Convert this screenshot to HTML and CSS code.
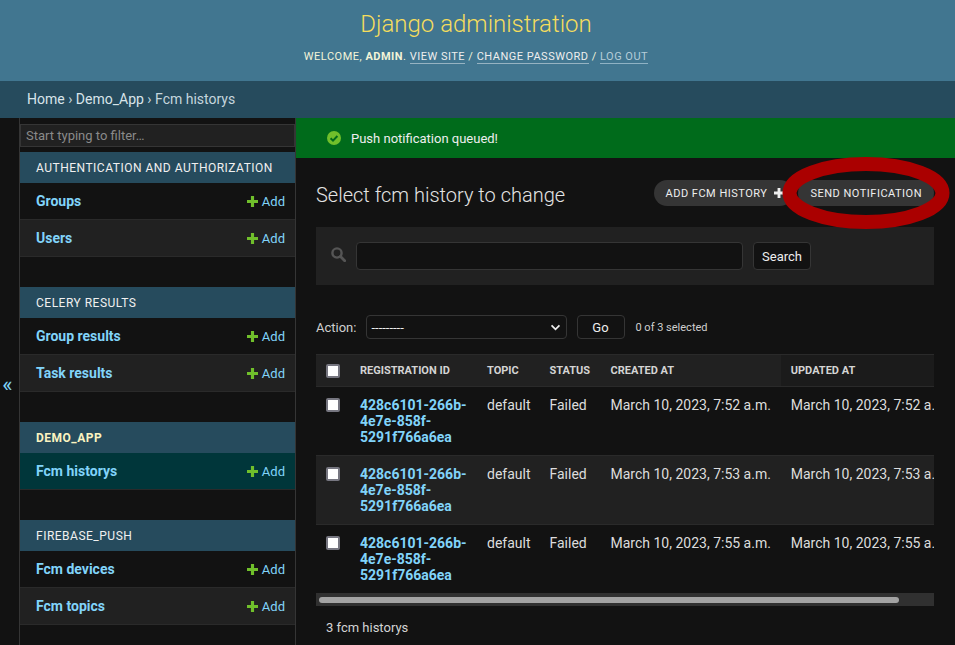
FILE: index.html
```html
<!DOCTYPE html>
<html lang="en">
<head>
    <meta charset="UTF-8">
    <title>Select fcm history to change | Django site admin</title>
    <link rel="stylesheet" href="styles.css">
</head>
<body>
    <header class="site-header">
        <h1 class="brand">Django administration</h1>
        <div class="user-tools">
            Welcome, <strong>admin</strong>. <a href="#">View site</a> / <a href="#">Change password</a> / <a href="#" class="visited">Log out</a>
        </div>
    </header>
    <nav class="breadcrumbs"><a href="#">Home</a> › <a href="#">Demo_App</a> › Fcm historys</nav>

    <div class="main">
        <button class="nav-toggle" type="button">«</button>
        <aside class="sidebar">
            <input class="nav-filter" type="text" placeholder="Start typing to filter…">

            <section class="app">
                <h2 class="app-title">Authentication and Authorization</h2>
                <div class="model"><a href="#" class="model-name">Groups</a><a href="#" class="add-link"><svg viewBox="0 0 14 14"><path d="M5 0h4v5h5v4H9v5H5V9H0V5h5z"/></svg>Add</a></div>
                <div class="model alt"><a href="#" class="model-name">Users</a><a href="#" class="add-link"><svg viewBox="0 0 14 14"><path d="M5 0h4v5h5v4H9v5H5V9H0V5h5z"/></svg>Add</a></div>
            </section>
            <section class="app">
                <h2 class="app-title">Celery Results</h2>
                <div class="model"><a href="#" class="model-name">Group results</a><a href="#" class="add-link"><svg viewBox="0 0 14 14"><path d="M5 0h4v5h5v4H9v5H5V9H0V5h5z"/></svg>Add</a></div>
                <div class="model alt"><a href="#" class="model-name">Task results</a><a href="#" class="add-link"><svg viewBox="0 0 14 14"><path d="M5 0h4v5h5v4H9v5H5V9H0V5h5z"/></svg>Add</a></div>
            </section>
            <section class="app">
                <h2 class="app-title current">Demo_App</h2>
                <div class="model selected"><a href="#" class="model-name">Fcm historys</a><a href="#" class="add-link"><svg viewBox="0 0 14 14"><path d="M5 0h4v5h5v4H9v5H5V9H0V5h5z"/></svg>Add</a></div>
            </section>
            <section class="app">
                <h2 class="app-title">Firebase_Push</h2>
                <div class="model"><a href="#" class="model-name">Fcm devices</a><a href="#" class="add-link"><svg viewBox="0 0 14 14"><path d="M5 0h4v5h5v4H9v5H5V9H0V5h5z"/></svg>Add</a></div>
                <div class="model alt"><a href="#" class="model-name">Fcm topics</a><a href="#" class="add-link"><svg viewBox="0 0 14 14"><path d="M5 0h4v5h5v4H9v5H5V9H0V5h5z"/></svg>Add</a></div>
            </section>
        </aside>

        <main class="content">
            <div class="message">
                <svg class="message-icon" viewBox="0 0 14 14"><circle cx="7" cy="7" r="7" fill="#70bf2b"/><path d="M3.6 7.2l2.4 2.4 4.4-4.6" fill="none" stroke="#006b1b" stroke-width="2"/></svg>
                Push notification queued!
            </div>
            <div class="content-inner">
                <div class="title-row">
                    <h1 class="page-title">Select fcm history to change</h1>
                    <div class="object-tools">
                        <a href="#" class="tool-btn add-tool">Add fcm history<svg viewBox="0 0 14 14"><path d="M5 0h4v5h5v4H9v5H5V9H0V5h5z"/></svg></a>
                        <a href="#" class="tool-btn">Send notification</a>
                    </div>
                </div>

                <form class="search-bar">
                    <svg class="search-icon" viewBox="0 0 15 15"><circle cx="6" cy="6" r="4.6" fill="none" stroke="#555" stroke-width="2.4"/><path d="M9.5 9.5l4.2 4.2" stroke="#555" stroke-width="2.8" stroke-linecap="round"/></svg>
                    <input class="search-input" type="text">
                    <button class="btn search-btn" type="button">Search</button>
                </form>

                <div class="actions">
                    <label>Action:</label>
                    <div class="fake-select">---------<svg viewBox="0 0 12 8"><path d="M1.5 1.5L6 6l4.5-4.5" fill="none" stroke="#eee" stroke-width="2"/></svg></div>
                    <button class="btn go-btn" type="button">Go</button>
                    <span class="selected-count">0 of 3 selected</span>
                </div>

                <div class="table-wrap">
                    <table class="results">
                        <thead>
                            <tr>
                                <th class="check"><span class="checkbox"></span></th>
                                <th class="col-id">Registration ID</th>
                                <th class="col-topic">Topic</th>
                                <th class="col-status">Status</th>
                                <th class="col-date">Created at</th>
                                <th class="col-date sorted">Updated at</th>
                            </tr>
                        </thead>
                        <tbody>
                            <tr>
                                <td class="check"><span class="checkbox"></span></td>
                                <td class="col-id"><a href="#">428c6101-266b-4e7e-858f-5291f766a6ea</a></td>
                                <td>default</td>
                                <td>Failed</td>
                                <td>March 10, 2023, 7:52 a.m.</td>
                                <td>March 10, 2023, 7:52 a.m.</td>
                            </tr>
                            <tr class="alt">
                                <td class="check"><span class="checkbox"></span></td>
                                <td class="col-id"><a href="#">428c6101-266b-4e7e-858f-5291f766a6ea</a></td>
                                <td>default</td>
                                <td>Failed</td>
                                <td>March 10, 2023, 7:53 a.m.</td>
                                <td>March 10, 2023, 7:53 a.m.</td>
                            </tr>
                            <tr>
                                <td class="check"><span class="checkbox"></span></td>
                                <td class="col-id"><a href="#">428c6101-266b-4e7e-858f-5291f766a6ea</a></td>
                                <td>default</td>
                                <td>Failed</td>
                                <td>March 10, 2023, 7:55 a.m.</td>
                                <td>March 10, 2023, 7:55 a.m.</td>
                            </tr>
                        </tbody>
                    </table>
                </div>
                <div class="scroll-track"><div class="scroll-thumb"></div></div>
                <p class="paginator">3 fcm historys</p>
            </div>
        </main>
    </div>

    <svg class="annotation" viewBox="0 0 955 645"><ellipse cx="866" cy="193" rx="76.5" ry="29" fill="none" stroke="#aa0000" stroke-width="14"/></svg>
</body>
</html>
```

FILE: styles.css
```css
* {
    box-sizing: border-box;
}
html, body {
    height: 100%;
    overflow: hidden;
}
body {
    margin: 0;
    position: relative;
    font-family: Roboto, "Liberation Sans", sans-serif;
    font-size: 14px;
    color: #eeeeee;
    background-color: #121212;
}
a {
    text-decoration: none;
}

.site-header {
    height: 81px;
    padding: 10px 3px 0 0;
    text-align: center;
    background-color: #417690;
}
.brand {
    margin: 0;
    font-size: 24px;
    line-height: 28px;
    font-weight: 300;
    color: #f5dd5d;
}
.user-tools {
    margin-top: 12px;
    font-size: 11px;
    line-height: 14px;
    letter-spacing: 0.5px;
    text-transform: uppercase;
    color: #f3f4d8;
}
.user-tools strong {
    font-weight: 700;
}
.user-tools a {
    color: #eeeeee;
    border-bottom: 1px solid rgba(255, 255, 255, 0.45);
}
.user-tools a.visited {
    color: #b5cdd9;
    border-bottom-color: #8fb2c4;
}

.breadcrumbs {
    height: 37px;
    padding: 0 27px;
    line-height: 36px;
    color: #c5d6de;
    background-color: #264b5d;
}
.breadcrumbs a {
    color: #d8e4ea;
}

.main {
    display: flex;
    height: 527px;
}
.nav-toggle {
    flex: 0 0 20px;
    padding: 5px 4px 0 0;
    border: none;
    border-right: 1px solid #353535;
    background-color: #121212;
    color: #81d4fa;
    font-family: inherit;
    font-size: 22px;
}
.sidebar {
    flex: 0 0 276px;
    padding-top: 6px;
    border-right: 1px solid #353535;
}
.nav-filter {
    display: block;
    width: 100%;
    height: 23px;
    margin-bottom: 5px;
    padding: 2px 5px;
    border: 1px solid #353535;
    background-color: #212121;
    color: #eeeeee;
    font-family: inherit;
    font-size: 13px;
}
.nav-filter::placeholder {
    color: #8a8a8a;
}
.app {
    margin-bottom: 30px;
}
.app-title {
    height: 31px;
    margin: 0;
    padding: 1px 0 0 16px;
    font-size: 12px;
    font-weight: 400;
    line-height: 31px;
    letter-spacing: 0.5px;
    text-transform: uppercase;
    color: #f0f0f0;
    background-color: #264b5d;
}
.app-title.current {
    font-weight: 700;
    color: #fbf3c0;
}
.model {
    display: flex;
    justify-content: space-between;
    align-items: center;
    height: 37px;
    padding: 0 10px 1px 16px;
    border-bottom: 1px solid #2a2a2a;
}
.model.alt {
    background-color: #212121;
}
.model.selected {
    background-color: #00363a;
}
.model-name {
    font-weight: 700;
    color: #81d4fa;
}
.add-link {
    display: flex;
    align-items: center;
    padding-top: 1px;
    font-size: 13px;
    color: #81d4fa;
}
.add-link svg {
    width: 11px;
    height: 11px;
    margin-right: 4px;
    fill: #70bf2b;
}

.content {
    flex: 1;
    min-width: 0;
}
.message {
    display: flex;
    align-items: center;
    height: 40px;
    padding-left: 31px;
    font-size: 13px;
    color: #eeeeee;
    background-color: #006b1b;
}
.message-icon {
    width: 14px;
    height: 14px;
    margin-right: 10px;
}
.content-inner {
    padding: 0 21px 0 20px;
}
.title-row {
    display: flex;
    justify-content: space-between;
    align-items: center;
    height: 69px;
    padding-top: 6px;
}
.page-title {
    margin: -2px 0 0;
    font-size: 20px;
    font-weight: 300;
    color: #e4e4e4;
}
.object-tools {
    display: flex;
    gap: 5px;
    margin-top: -6px;
}
.tool-btn {
    display: flex;
    align-items: center;
    height: 26px;
    padding: 1px 12px 0;
    border-radius: 15px;
    font-size: 11px;
    letter-spacing: 0.5px;
    text-transform: uppercase;
    color: #eeeeee;
    background-color: #353535;
}
.add-tool {
    padding-right: 9px;
}
.tool-btn svg {
    width: 10px;
    height: 10px;
    margin-left: 7px;
    fill: #eeeeee;
}

.search-bar {
    display: flex;
    align-items: center;
    height: 58px;
    padding: 0 15px;
    background-color: #212121;
}
.search-icon {
    width: 15px;
    height: 15px;
    margin-right: 10px;
    margin-top: -4px;
}
.search-input {
    width: 387px;
    height: 28px;
    padding: 2px 5px;
    border: 1px solid #353535;
    border-radius: 4px;
    background-color: #121212;
    color: #eeeeee;
}
.btn {
    height: 28px;
    border: 1px solid #353535;
    border-radius: 4px;
    background-color: #121212;
    color: #eeeeee;
    font-family: inherit;
    font-size: 13px;
}
.search-btn {
    width: 58px;
    margin-left: 10px;
}

.actions {
    display: flex;
    align-items: center;
    height: 24px;
    margin-top: 30px;
    font-size: 13px;
    color: #cfcfcf;
}
.fake-select {
    display: flex;
    justify-content: space-between;
    align-items: center;
    width: 201px;
    height: 24px;
    margin-left: 10px;
    padding: 0 5px 0 4px;
    border: 1px solid #353535;
    border-radius: 4px;
    color: #eeeeee;
    font-size: 13px;
}
.fake-select svg {
    width: 11px;
    height: 7px;
}
.go-btn {
    width: 48px;
    height: 24px;
    margin-left: 10px;
    padding: 0 8px 0 6px;
}
.selected-count {
    margin-left: 10px;
    font-size: 11px;
}

.table-wrap {
    margin-top: 15px;
    overflow: hidden;
}
.results {
    width: 645px;
    table-layout: fixed;
    border-collapse: collapse;
    font-size: 14px;
    white-space: nowrap;
}
.results th {
    height: 32px;
    padding: 0 10px;
    font-size: 11px;
    font-weight: 700;
    text-align: left;
    text-transform: uppercase;
    color: #d4d4d4;
    background-color: #212121;
    border-bottom: 1px solid #2a2a2a;
    border-top: 1px solid #2a2a2a;
}
.results th.sorted {
    background-color: #1b1b1b;
}
.results td {
    height: 69px;
    padding: 10px 10px 0;
    line-height: 16px;
    vertical-align: top;
    color: #dddddd;
    border-bottom: 1px solid #2a2a2a;
}
.results tr:last-child td {
    height: 68px;
    border-bottom: none;
}
.results tr.alt td {
    background-color: #212121;
}
.results td a {
    font-weight: 700;
    color: #81d4fa;
}
.results .check {
    width: 34px;
    padding-left: 10px;
    padding-right: 0;
}
.results th.check {
    vertical-align: middle;
}
.results .col-id {
    width: 127px;
    white-space: normal;
}
.results .col-topic {
    width: 62.5px;
}
.results .col-status {
    width: 61px;
}
.results .col-date {
    width: 180.25px;
}
.checkbox {
    display: block;
    width: 14px;
    height: 14px;
    border: 2px solid #767680;
    border-radius: 2px;
    background-color: #ffffff;
}
.results td .checkbox {
    margin-top: 1px;
}

.scroll-track {
    height: 13px;
    padding: 4px 35px 3px 3px;
    background-color: #303030;
}
.scroll-thumb {
    height: 6px;
    border-radius: 3px;
    background-color: #a3a3a3;
}
.paginator {
    margin: 14px 0 0 10px;
    font-size: 13px;
    line-height: 16px;
    color: #d4d4d4;
}

.annotation {
    position: absolute;
    top: 0;
    left: 0;
    width: 955px;
    height: 645px;
    pointer-events: none;
}
```
